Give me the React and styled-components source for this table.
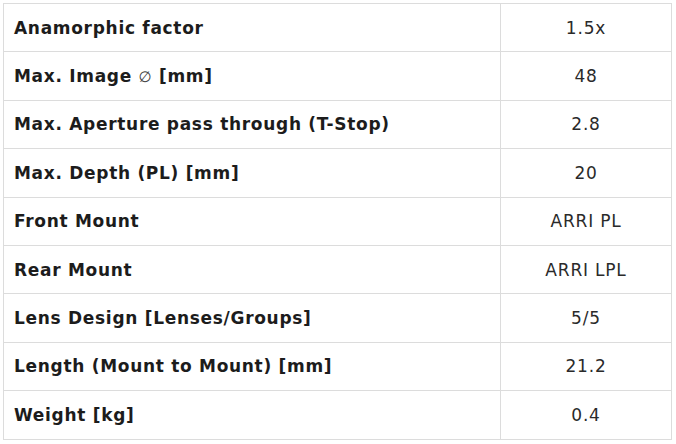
import React from 'react';
import styled, {createGlobalStyle} from 'styled-components';

const GlobalStyle = createGlobalStyle`
    body {
        margin: 0;
        background: #ffffff;
        font-family: "DejaVu Sans", "Liberation Sans", sans-serif;
        color: #1c1c1c;
    }
`

const Wrapper = styled.div`
    padding: 3px 4px 0 3px;
`

const Table = styled.table`
    width: 669px;
    border-collapse: collapse;
    border: 1px solid #dcdcdc;
`

const Row = styled.tr`
    height: 48.4px;
`

const Label = styled.td`
    width: 486px;
    padding: 0 0 0 10px;
    border: 1px solid #dcdcdc;
    font-size: 17px;
    font-weight: 700;
    letter-spacing: 0.7px;
`

const Diameter = styled.span`
    font-weight: 400;
    font-size: 15px;
    color: #444;
`

const Value = styled.td`
    border: 1px solid #dcdcdc;
    text-align: center;
    font-size: 17px;
    font-weight: 400;
    letter-spacing: 0.8px;
    color: #2a2a2a;
`

const specs = [
    ["Anamorphic factor", "1.5x"],
    [<>Max. Image <Diameter>{"\u2205"}</Diameter> [mm]</>, "48"],
    ["Max. Aperture pass through (T-Stop)", "2.8"],
    ["Max. Depth (PL) [mm]", "20"],
    ["Front Mount", "ARRI PL"],
    ["Rear Mount", "ARRI LPL"],
    ["Lens Design [Lenses/Groups]", "5/5"],
    ["Length (Mount to Mount) [mm]", "21.2"],
    ["Weight [kg]", "0.4"],
]

const App = () => {
    return (
        <Wrapper>
            <GlobalStyle/>
            <Table>
                <tbody>
                    {specs.map(([label, value], i) => (
                        <Row key={i}>
                            <Label>{label}</Label>
                            <Value>{value}</Value>
                        </Row>
                    ))}
                </tbody>
            </Table>
        </Wrapper>
    )
}

export default App;
